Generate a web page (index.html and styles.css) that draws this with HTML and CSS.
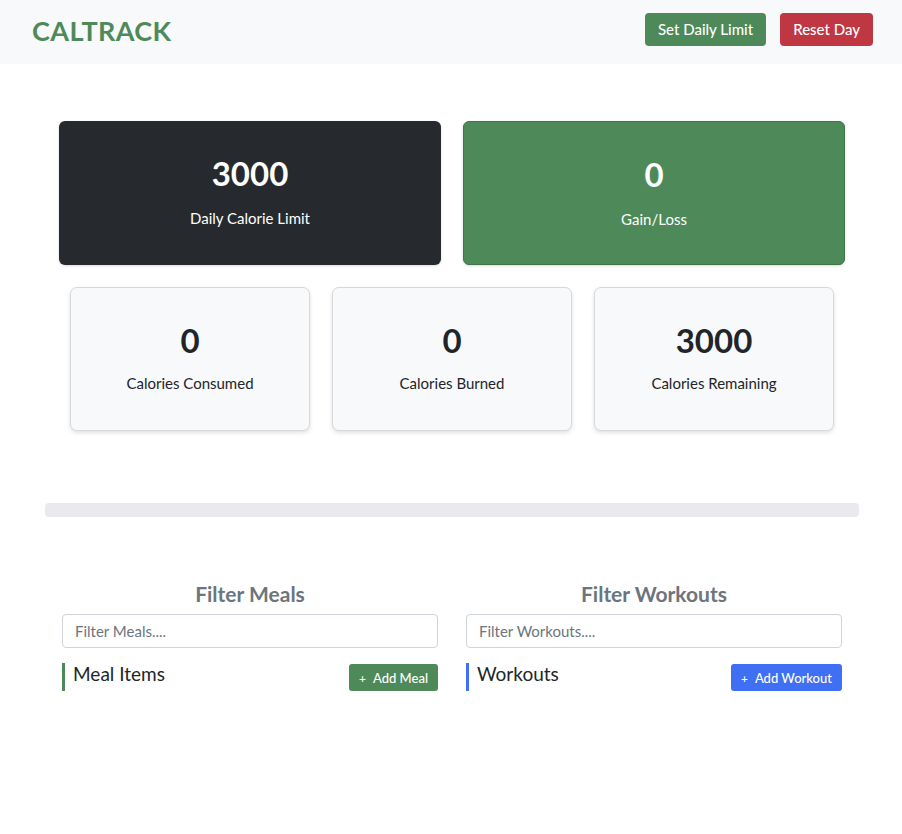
FILE: index.html
```html
<!DOCTYPE html>
<html>
<head>
<meta charset="utf-8">
<link rel="stylesheet" href="styles.css">
</head>
<body>
<header class="topbar">
  <div class="brand">CALTRACK</div>
  <div class="top-actions">
    <button class="btn btn-green">Set Daily Limit</button>
    <button class="btn btn-red">Reset Day</button>
  </div>
</header>
<main>
  <section class="row-big">
    <div class="card card-dark"><div class="num">3000</div><div class="label">Daily Calorie Limit</div></div>
    <div class="card card-green"><div class="num">0</div><div class="label">Gain/Loss</div></div>
  </section>
  <section class="row-small">
    <div class="card card-light"><div class="num">0</div><div class="label">Calories Consumed</div></div>
    <div class="card card-light"><div class="num">0</div><div class="label">Calories Burned</div></div>
    <div class="card card-light"><div class="num">3000</div><div class="label">Calories Remaining</div></div>
  </section>
  <div class="progress"></div>
  <section class="lists">
    <div class="col">
      <h2 class="filter-title">Filter Meals</h2>
      <input class="filter" type="text" placeholder="Filter Meals....">
      <div class="list-head">
        <div class="list-title meal">Meal Items</div>
        <button class="btn-sm btn-green"><span class="plus">+</span>Add Meal</button>
      </div>
    </div>
    <div class="col">
      <h2 class="filter-title">Filter Workouts</h2>
      <input class="filter" type="text" placeholder="Filter Workouts....">
      <div class="list-head">
        <div class="list-title workout">Workouts</div>
        <button class="btn-sm btn-blue"><span class="plus">+</span>Add Workout</button>
      </div>
    </div>
  </section>
</main>
</body>
</html>
```
FILE: styles.css
```css
* { box-sizing: border-box; }
body {
  margin: 0;
  font-family: "Lato", "Noto Sans", sans-serif;
  color: #212529;
  background: #fff;
}
.topbar {
  height: 64px;
  background: #f8f9fa;
  display: flex;
  align-items: center;
  justify-content: space-between;
  padding: 0 29px 0 32px;
}
.brand {
  font-size: 27px;
  font-weight: 700;
  color: #4e8a59;
  letter-spacing: 0.4px;
  margin-top: -4px;
}
.top-actions { display: flex; gap: 14px; margin-top: -6px; }
.btn {
  border: 0;
  border-radius: 4px;
  height: 33px;
  padding: 0 13px;
  font-family: inherit;
  font-size: 15px;
  font-weight: 500;
  color: #fff;
}
.btn-green { background: #4e8a59; }
.btn-red { background: #c03744; }
.btn-blue { background: #3f6ff2; }
main { padding: 57px 43px 0 45px; }
.row-big {
  display: flex;
  gap: 22px;
  padding: 0 14px;
}
.card {
  height: 144px;
  border-radius: 6px;
  display: flex;
  flex-direction: column;
  align-items: center;
  padding-top: 32px;
}
.row-big .card { width: 382px; color: #fff; box-shadow: 0 1px 3px rgba(0,0,0,0.15); }
.row-big .label { margin-top: 15px; }
.card-dark { background: #262a2e; }
.card-green { background: #4e8a59; border: 1px solid #3f7349; }
.num { font-size: 33px; font-weight: 700; line-height: 40px; }
.label { font-size: 15px; margin-top: 13px; line-height: 20px; font-weight: 400; }
.row-small {
  display: flex;
  gap: 22px;
  padding: 0 25px;
  margin-top: 22px;
}
.card-light {
  width: 240px;
  background: #f8f9fa;
  border: 1px solid #d6d8db;
  border-radius: 7px;
  box-shadow: 0 2px 4px rgba(0,0,0,0.12);
}
.progress {
  margin-top: 72px;
  height: 14px;
  width: 814px;
  background: #e9e9ee;
  border-radius: 4px;
}
.lists {
  display: flex;
  gap: 28px;
  padding: 0 17px;
  margin-top: 64px;
}
.col { width: 376px; }
.filter-title {
  text-align: center;
  margin: 0;
  font-size: 21px;
  font-weight: 700;
  color: #6c757d;
  line-height: 26px;
}
.filter {
  display: block;
  width: 100%;
  height: 34px;
  margin-top: 7px;
  border: 1px solid #ced4da;
  border-radius: 4px;
  padding: 0 12px;
  font-family: inherit;
  font-size: 15px;
  color: #212529;
  background: #fff;
}
.filter::placeholder { color: #6c757d; }
.list-head {
  display: flex;
  justify-content: space-between;
  margin-top: 15px;
}
.list-title {
  font-size: 19px;
  line-height: 22px;
  padding-left: 8px;
  border-left: 3px solid #4e8a59;
}
.list-title.workout { border-left-color: #3f6ff2; }
.btn-sm {
  border: 0;
  border-radius: 3px;
  height: 27px;
  margin-top: 1px;
  padding: 0 10px;
  font-family: inherit;
  font-size: 13px;
  font-weight: 500;
  color: #fff;
}
.plus { font-size: 12px; margin-right: 7px; }
```
